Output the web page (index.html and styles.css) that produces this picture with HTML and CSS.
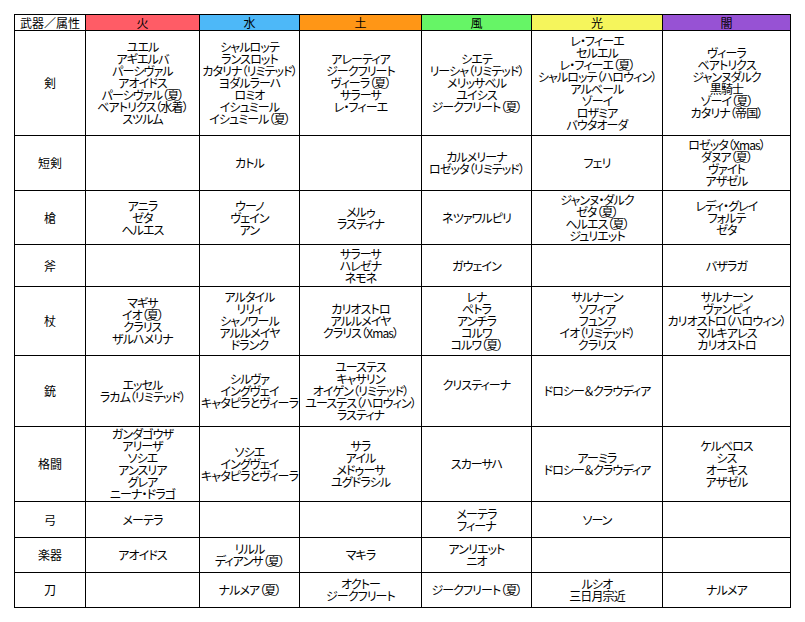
FILE: index.html
```html
<!DOCTYPE html>
<html lang="ja">
<head>
<meta charset="utf-8">
<title>武器／属性</title>
<link rel="stylesheet" href="styles.css">
</head>
<body>
<div class="sheet">
  <div class="cell head">武器／属性</div>
  <div class="cell head fire">火</div>
  <div class="cell head water">水</div>
  <div class="cell head earth">土</div>
  <div class="cell head wind">風</div>
  <div class="cell head light">光</div>
  <div class="cell head dark">闇</div>

  <div class="cell label">剣</div>
  <div class="cell">ユエル<br>アギエルバ<br>パーシヴァル<br>アオイドス<br>パーシヴァル（夏）<br>ベアトリクス（水着）<br>スツルム</div>
  <div class="cell">シャルロッテ<br>ランスロット<br>カタリナ（リミテッド）<br>ヨダルラーハ<br>ロミオ<br>イシュミール<br>イシュミール（夏）</div>
  <div class="cell">アレーティア<br>ジークフリート<br>ヴィーラ（夏）<br>サラーサ<br>レ・フィーエ</div>
  <div class="cell">シエテ<br>リーシャ（リミテッド）<br>メリッサベル<br>ユイシス<br>ジークフリート（夏）</div>
  <div class="cell">レ・フィーエ<br>セルエル<br>レ・フィーエ（夏）<br>シャルロッテ（ハロウィン）<br>アルベール<br>ゾーイ<br>ロザミア<br>バウタオーダ</div>
  <div class="cell">ヴィーラ<br>ベアトリクス<br>ジャンヌダルク<br>黒騎士<br>ゾーイ（夏）<br>カタリナ（帝国）</div>

  <div class="cell label">短剣</div>
  <div class="cell"></div>
  <div class="cell">カトル</div>
  <div class="cell"></div>
  <div class="cell">カルメリーナ<br>ロゼッタ（リミテッド）</div>
  <div class="cell">フェリ</div>
  <div class="cell">ロゼッタ（Xmas）<br>ダヌア（夏）<br>ヴァイト<br>アザゼル</div>

  <div class="cell label">槍</div>
  <div class="cell">アニラ<br>ゼタ<br>ヘルエス</div>
  <div class="cell">ウーノ<br>ヴェイン<br>アン</div>
  <div class="cell">メルゥ<br>ラスティナ</div>
  <div class="cell">ネツァワルピリ</div>
  <div class="cell">ジャンヌ・ダルク<br>ゼタ（夏）<br>ヘルエス（夏）<br>ジュリエット</div>
  <div class="cell">レディ・グレイ<br>フォルテ<br>ゼタ</div>

  <div class="cell label">斧</div>
  <div class="cell"></div>
  <div class="cell"></div>
  <div class="cell">サラーサ<br>ハレゼナ<br>ネモネ</div>
  <div class="cell">ガウェイン</div>
  <div class="cell"></div>
  <div class="cell">バザラガ</div>

  <div class="cell label">杖</div>
  <div class="cell">マギサ<br>イオ（夏）<br>クラリス<br>ザルハメリナ</div>
  <div class="cell">アルタイル<br>リリィ<br>シャノワール<br>アルルメイヤ<br>ドランク</div>
  <div class="cell">カリオストロ<br>アルルメイヤ<br>クラリス（Xmas）</div>
  <div class="cell">レナ<br>ペトラ<br>アンチラ<br>コルワ<br>コルワ（夏）</div>
  <div class="cell">サルナーン<br>ソフィア<br>フュンフ<br>イオ（リミテッド）<br>クラリス</div>
  <div class="cell">サルナーン<br>ヴァンピィ<br>カリオストロ（ハロウィン）<br>マルキアレス<br>カリオストロ</div>

  <div class="cell label">銃</div>
  <div class="cell">エッセル<br>ラカム（リミテッド）</div>
  <div class="cell">シルヴァ<br>イングヴェイ<br>キャタピラとヴィーラ</div>
  <div class="cell">ユーステス<br>キャサリン<br>オイゲン（リミテッド）<br>ユーステス（ハロウィン）<br>ラスティナ</div>
  <div class="cell">クリスティーナ<br>&nbsp;</div>
  <div class="cell">ドロシー＆クラウディア</div>
  <div class="cell"></div>

  <div class="cell label">格闘</div>
  <div class="cell">ガンダゴウザ<br>アリーザ<br>ソシエ<br>アンスリア<br>グレア<br>ニーナ・ドラゴ</div>
  <div class="cell">ソシエ<br>イングヴェイ<br>キャタピラとヴィーラ</div>
  <div class="cell">サラ<br>アイル<br>メドゥーサ<br>ユグドラシル</div>
  <div class="cell">スカーサハ</div>
  <div class="cell">アーミラ<br>ドロシー＆クラウディア</div>
  <div class="cell">ケルベロス<br>シス<br>オーキス<br>アザゼル</div>

  <div class="cell label">弓</div>
  <div class="cell">メーテラ</div>
  <div class="cell"></div>
  <div class="cell"></div>
  <div class="cell">メーテラ<br>フィーナ</div>
  <div class="cell">ソーン</div>
  <div class="cell"></div>

  <div class="cell label">楽器</div>
  <div class="cell">アオイドス</div>
  <div class="cell">リルル<br>ディアンサ（夏）</div>
  <div class="cell">マキラ</div>
  <div class="cell">アンリエット<br>ニオ</div>
  <div class="cell"></div>
  <div class="cell"></div>

  <div class="cell label">刀</div>
  <div class="cell"></div>
  <div class="cell">ナルメア（夏）</div>
  <div class="cell">オクトー<br>ジークフリート</div>
  <div class="cell">ジークフリート（夏）</div>
  <div class="cell">ルシオ<br>三日月宗近</div>
  <div class="cell">ナルメア</div>
</div>
</body>
</html>
```

FILE: styles.css
```css
html, body {
  margin: 0;
  padding: 0;
  background: #ffffff;
}

body {
  padding: 14px 0 0 14px;
  font-family: "Noto Sans CJK JP", "Noto Sans", sans-serif;
  font-size: 12px;
  color: #000000;
}

.sheet {
  display: grid;
  grid-template-columns: 70px 113px 99px 121px 109px 130px 127px;
  grid-template-rows: 15px 104px 54px 53px 41px 68px 70px 74px 35px 34px 34px;
  gap: 1px;
  width: max-content;
  background: #000000;
  border: 1px solid #000000;
}

.cell {
  display: flex;
  flex-direction: column;
  justify-content: center;
  align-items: center;
  background: #ffffff;
  text-align: center;
  line-height: 12px;
  letter-spacing: -0.9px;
  font-feature-settings: "palt" 1;
  white-space: nowrap;
}

.head {
  line-height: 15px;
  letter-spacing: 0;
}

.label {
  letter-spacing: 0;
}

.fire { background: #ff5c66; }
.water { background: #4db8f8; }
.earth { background: #ff9616; }
.wind { background: #66f566; }
.light { background: #f5f55c; }
.dark { background: #9752d4; }
```
